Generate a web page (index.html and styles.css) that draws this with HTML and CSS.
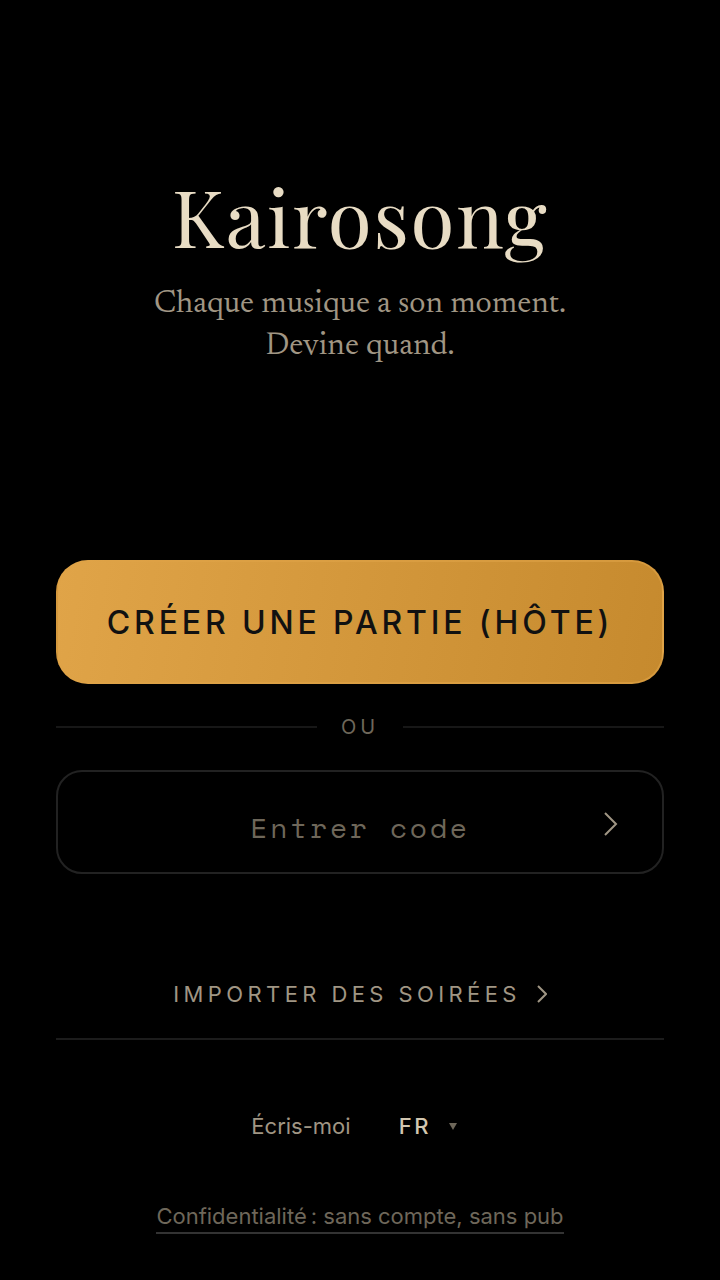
FILE: index.html
```
<!DOCTYPE html>
<html lang="fr">
<head>
  <meta charset="UTF-8">
  <meta name="viewport" content="width=device-width, initial-scale=1">
  <title>Kairosong</title>
  <link rel="stylesheet" href="styles.css">
</head>
<body>
  <main class="home">
    <header class="hero">
      <h1 class="title">Kairosong</h1>
      <p class="tagline">Chaque musique a son moment.<br>Devine quand.</p>
    </header>

    <button type="button" class="create">Créer une partie (hôte)</button>

    <div class="separator"><span>ou</span></div>

    <form class="join">
      <input type="text" class="code" placeholder="Entrer code" aria-label="Entrer code" maxlength="11" autocomplete="off">
      <button type="submit" class="go" aria-label="Rejoindre">
        <svg width="16" height="26" viewBox="0 0 16 26" fill="none" stroke="currentColor" stroke-width="2"><path d="M3 2l11 11L3 24"/></svg>
      </button>
    </form>

    <a href="#import" class="import">
      <span>Importer des soirées</span>
      <svg width="10" height="20" viewBox="0 0 10 20" fill="none" stroke="currentColor" stroke-width="2"><path d="M1 2l8 8-8 8"/></svg>
    </a>

    <footer class="footer">
      <div class="links">
        <a href="#contact" class="contact">Écris-moi</a>
        <div class="lang">
          <select class="lang-select" aria-label="Langue">
            <option>FR</option>
            <option>EN</option>
          </select>
          <svg class="lang-arrow" width="8" height="7" viewBox="0 0 8 7"><path d="M0 0h8L4 7z" fill="currentColor"/></svg>
        </div>
      </div>
      <a href="#privacy" class="privacy">Confidentialité&#8239;: sans compte, sans pub</a>
    </footer>
  </main>
</body>
</html>
```
FILE: styles.css
```
* {
  box-sizing: border-box;
}

body {
  margin: 0;
  background: #000;
  color: #e8dcc4;
  font-family: Inter, sans-serif;
  font-size: 22px;
}

a {
  color: inherit;
  text-decoration: none;
}

button, input, select {
  font: inherit;
  color: inherit;
}

svg {
  display: block;
}

.home {
  display: flex;
  flex-direction: column;
  min-height: 100vh;
  padding: 0 56px 46px;
}

/* title block */
.hero {
  flex: 1;
  display: flex;
  flex-direction: column;
  align-items: center;
  justify-content: center;
  padding-bottom: 22px;
  text-align: center;
}

.title {
  margin: 0 0 24px;
  font-family: "Playfair Display", "Liberation Serif", serif;
  font-size: 80px;
  font-weight: 400;
  line-height: 88px;
  letter-spacing: 0.02em;
}

.tagline {
  margin: 0;
  color: #a09684;
  font-family: "Newsreader Text", Newsreader, "Liberation Serif", serif;
  font-size: 32px;
  line-height: 42px;
}

.create {
  height: 124px;
  padding: 0;
  border: 2px solid rgba(224, 164, 72, 0.6);
  border-radius: 32px;
  background: linear-gradient(100deg, #e0a448, #c68a2e);
  color: #111;
  font-size: 32px;
  font-weight: 500;
  letter-spacing: 0.12em;
  text-transform: uppercase;
  cursor: pointer;
}

.separator {
  display: flex;
  align-items: center;
  gap: 24px;
  margin: 30px 0;
  color: #6e675a;
  font-size: 20px;
  line-height: 26px;
  letter-spacing: 0.2em;
  text-transform: uppercase;
}

.separator::before,
.separator::after {
  content: "";
  flex: 1;
  height: 2px;
  background: #171717;
}

/* code entry */
.join {
  display: flex;
  position: relative;
}

.code {
  flex: 1;
  min-width: 0;
  height: 104px;
  padding: 10px 64px 0;
  border: 2px solid #222;
  border-radius: 26px;
  background: transparent;
  font-family: "Space Mono", "Liberation Mono", monospace;
  font-size: 28px;
  letter-spacing: 0.1em;
  text-align: center;
}

.code::placeholder {
  color: #6e675a;
  opacity: 1;
}

.go {
  position: absolute;
  top: 0;
  right: 24px;
  height: 100%;
  padding: 4px 22px 0;
  border: 0;
  background: none;
  color: #a09684;
  cursor: pointer;
}

.import {
  display: flex;
  align-items: center;
  justify-content: center;
  gap: 16px;
  margin-top: 76px;
  padding: 30px 0;
  border-bottom: 2px solid #1c1c1c;
  color: #a09684;
  line-height: 28px;
  letter-spacing: 0.2em;
  text-transform: uppercase;
}

.footer {
  display: flex;
  flex-direction: column;
  align-items: center;
  gap: 62px;
  margin-top: 72px;
}

.links {
  display: flex;
  align-items: center;
  gap: 48px;
  line-height: 28px;
}

.contact {
  color: #a09684;
}

.lang {
  position: relative;
}

.lang-select {
  width: 70px;
  height: 28px;
  padding: 0;
  border: 0;
  background: transparent;
  appearance: none;
  color: #d2c6b0;
  font-weight: 500;
  letter-spacing: 0.12em;
}

.lang-arrow {
  position: absolute;
  top: 11px;
  right: 12px;
  color: #6e675a;
  pointer-events: none;
}

.privacy {
  padding-bottom: 2px;
  border-bottom: 2px solid #333;
  color: #6e675a;
  line-height: 28px;
}
```
